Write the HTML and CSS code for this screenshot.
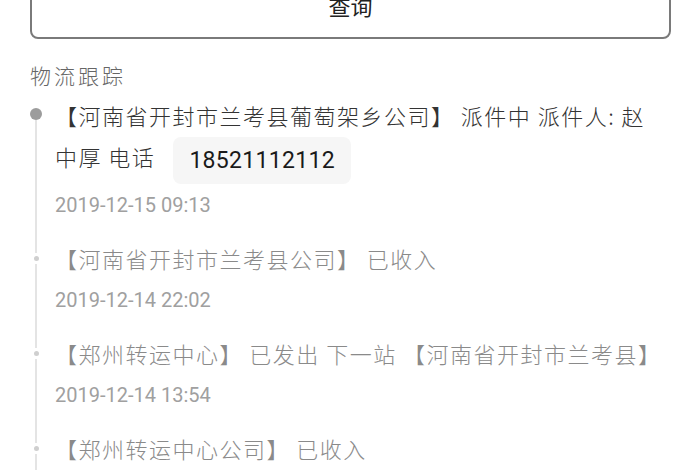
FILE: index.html
```html
<!DOCTYPE html>
<html lang="zh-CN">
<head>
<meta charset="utf-8">
<link rel="stylesheet" href="styles.css">
</head>
<body>
<div class="page">
  <div class="btn">查询</div>
  <div class="title">物流跟踪</div>
  <div class="timeline">
    <div class="item first">
      <div class="rail"><span class="dot"></span><span class="line"></span></div>
      <div class="body">
        <div class="text">【河南省开封市兰考县葡萄架乡公司】 派件中 派件人: 赵中厚 电话<span class="chip">18521112112</span></div>
        <div class="date">2019-12-15 09:13</div>
      </div>
    </div>
    <div class="item">
      <div class="rail"><span class="seg"></span><span class="dot"></span><span class="line"></span></div>
      <div class="body">
        <div class="text">【河南省开封市兰考县公司】 已收入</div>
        <div class="date">2019-12-14 22:02</div>
      </div>
    </div>
    <div class="item">
      <div class="rail"><span class="seg"></span><span class="dot"></span><span class="line"></span></div>
      <div class="body">
        <div class="text">【郑州转运中心】 已发出 下一站 【河南省开封市兰考县】</div>
        <div class="date">2019-12-14 13:54</div>
      </div>
    </div>
    <div class="item">
      <div class="rail"><span class="seg"></span><span class="dot"></span><span class="line"></span></div>
      <div class="body">
        <div class="text">【郑州转运中心公司】 已收入</div>
        <div class="date">2019-12-14 08:21</div>
      </div>
    </div>
  </div>
</div>
</body>
</html>
```
FILE: styles.css
```css
html, body {
  margin: 0;
  padding: 0;
  background: #fff;
}
body {
  font-family: "Noto Sans CJK SC", "Noto Sans", Roboto, sans-serif;
  overflow: hidden;
}
.page {
  padding: 0 29px 0 30px;
}
.btn {
  margin-top: -24px;
  height: 63px;
  line-height: 54px;
  border: 2px solid #7a7a7a;
  border-radius: 8px;
  text-align: center;
  font-size: 22px;
  color: #222;
  box-sizing: border-box;
}
.title {
  margin-top: 21px;
  font-size: 21px;
  line-height: 30px;
  color: #666;
  letter-spacing: 3px;
  font-weight: 300;
}
.timeline {
  margin-top: 5px;
}
.item {
  display: grid;
  grid-template-columns: 12px 1fr;
  column-gap: 13px;
}
.rail {
  display: flex;
  flex-direction: column;
  align-items: center;
}
.seg {
  width: 2px;
  height: 15px;
  background: #e4e4e4;
  margin-bottom: 3px;
}
.line {
  flex: 1;
  width: 2px;
  background: #e4e4e4;
  margin-top: 3px;
}
.dot {
  width: 5px;
  height: 5px;
  border-radius: 50%;
  background: #cfcfcf;
  flex: none;
}
.first .dot {
  width: 12px;
  height: 12px;
  background: #9c9c9c;
  margin-top: 13px;
}
.first .line {
  margin-top: 0;
}
.body {
  padding-bottom: 18px;
  padding-right: 18px;
}
.text {
  font-size: 22px;
  line-height: 40px;
  color: #8a8a8a;
  letter-spacing: 1.5px;
  font-weight: 300;
}
.first .text {
  color: #333;
  line-height: 41px;
}
.chip {
  display: inline-block;
  vertical-align: middle;
  margin-left: 18px;
  height: 47px;
  line-height: 47px;
  padding: 0 16px;
  background: #f6f6f6;
  border-radius: 8px;
  color: #1a1a1a;
  font-family: Roboto, "Noto Sans", sans-serif;
  font-size: 23px;
  font-weight: 400;
  letter-spacing: 0.3px;
}
.date {
  margin-top: 7px;
  font-family: Roboto, "Noto Sans", sans-serif;
  font-size: 20px;
  line-height: 30px;
  color: #a0a0a0;
}
.first .date {
  margin-top: 6px;
}
```
